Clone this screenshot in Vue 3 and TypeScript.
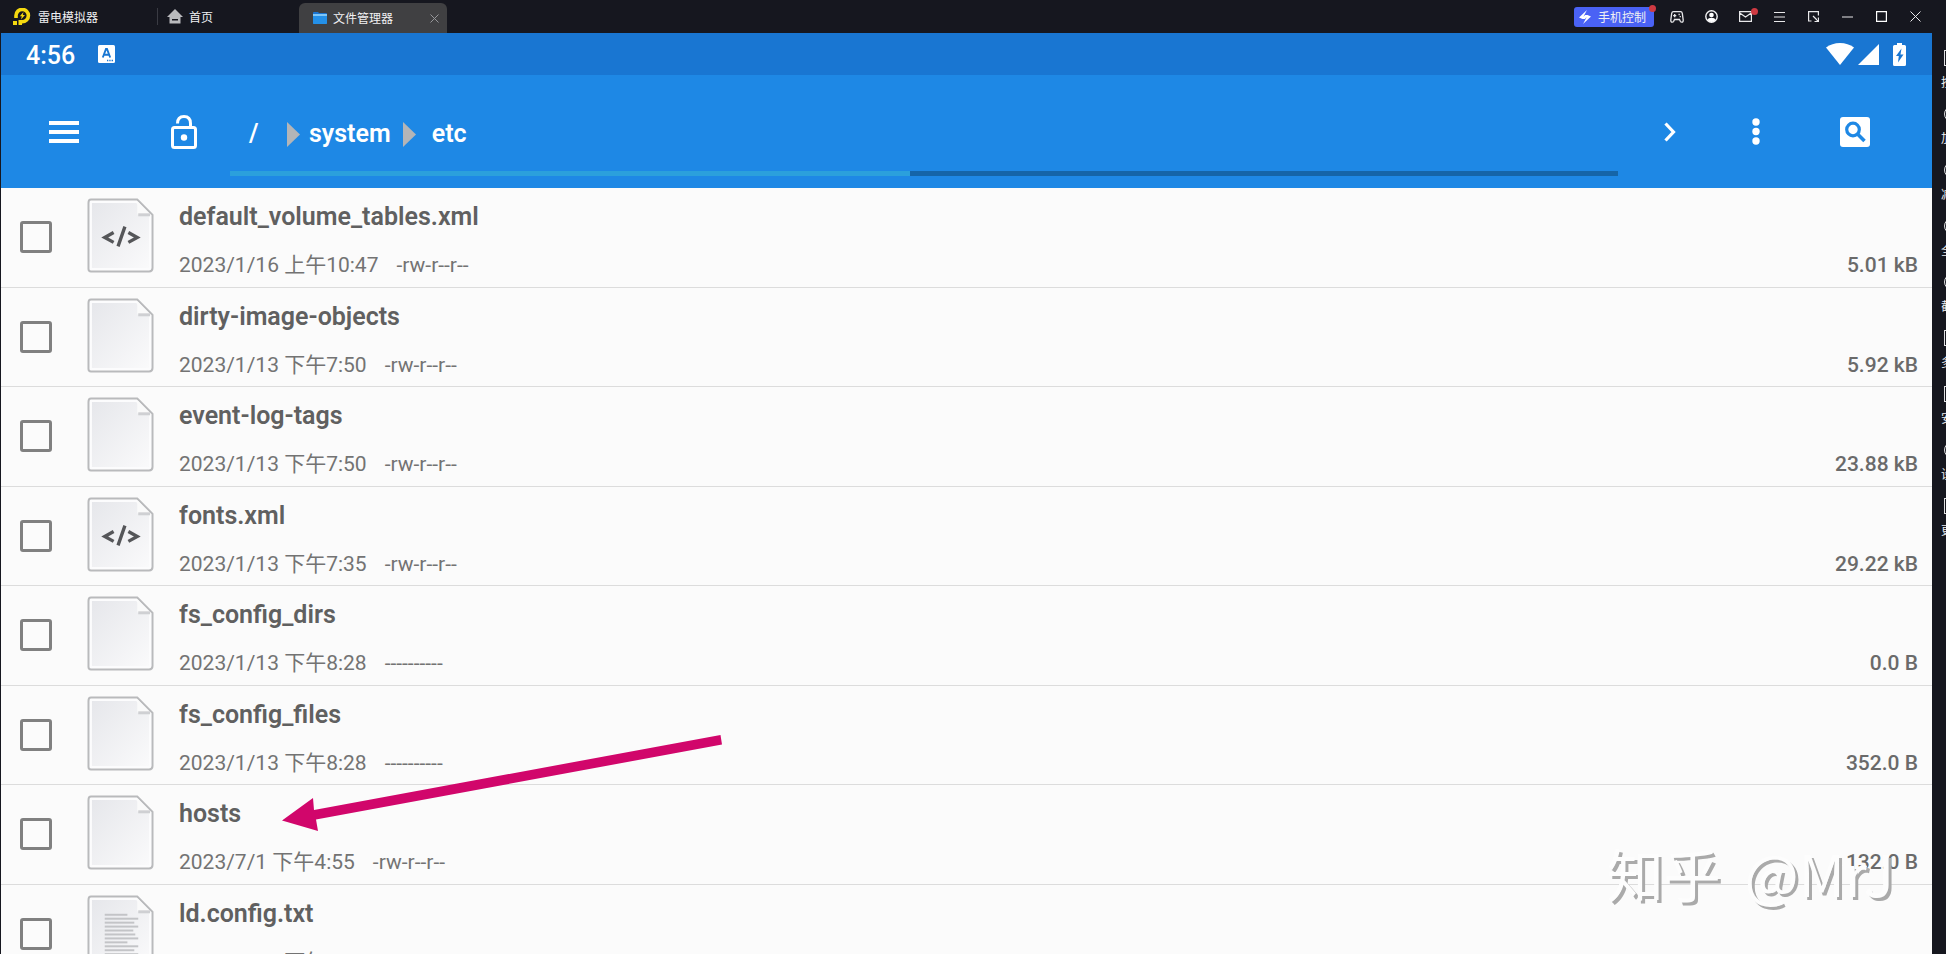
<script setup lang="ts">
interface FileRow {
  name: string
  date: string
  mode: string
  size: string
  kind: 'plain' | 'code' | 'text'
}

const files: FileRow[] = [
  { name: 'default_volume_tables.xml', date: '2023/1/16 上午10:47', mode: '-rw-r--r--', size: '5.01 kB', kind: 'code' },
  { name: 'dirty-image-objects', date: '2023/1/13 下午7:50', mode: '-rw-r--r--', size: '5.92 kB', kind: 'plain' },
  { name: 'event-log-tags', date: '2023/1/13 下午7:50', mode: '-rw-r--r--', size: '23.88 kB', kind: 'plain' },
  { name: 'fonts.xml', date: '2023/1/13 下午7:35', mode: '-rw-r--r--', size: '29.22 kB', kind: 'code' },
  { name: 'fs_config_dirs', date: '2023/1/13 下午8:28', mode: '----------', size: '0.0 B', kind: 'plain' },
  { name: 'fs_config_files', date: '2023/1/13 下午8:28', mode: '----------', size: '352.0 B', kind: 'plain' },
  { name: 'hosts', date: '2023/7/1 下午4:55', mode: '-rw-r--r--', size: '132.0 B', kind: 'plain' },
  { name: 'ld.config.txt', date: '2023/1/13 下午7:35', mode: '-rw-r--r--', size: '1.57 kB', kind: 'text' },
]

const textLines = [23, 34, 30, 34, 29, 31, 34, 23, 34, 30, 34, 29].map((w, i) => ({ w, y: 19 + i * 4 }))

interface Tool { label: string; shape: 'box' | 'round' }
const tools: Tool[] = [
  { label: '按键', shape: 'box' },
  { label: '加量', shape: 'round' },
  { label: '减量', shape: 'round' },
  { label: '全屏', shape: 'round' },
  { label: '截图', shape: 'round' },
  { label: '多开', shape: 'box' },
  { label: '安装', shape: 'box' },
  { label: '设置', shape: 'round' },
  { label: '更多', shape: 'box' },
]
</script>

<template>
  <div class="window">
    <header class="titlebar">
      <div class="brand">
        <svg width="18" height="18" viewBox="0 0 18 18">
          <path d="M3 10V7.500a6.200 6.200 0 1 1 6.200 6.300H8" fill="none" stroke="#f5d90f" stroke-width="3.600" />
          <path d="M10.500 4 6.800 8.300h2L8 11.500l4-4.500H9.800z" fill="#f5d90f" />
          <path d="M0 13h4v4H0zM5.500 12h3.500v5H5.500z" fill="#f5d90f" />
        </svg>
        <span>雷电模拟器</span>
      </div>
      <nav class="tabs">
        <button class="tab home" type="button">
          <svg width="16" height="15" viewBox="0 0 16 15">
            <path d="M8 0 0 8h2.500v6.500h11V8H16z" fill="#b9babd" />
            <path d="M5 10h6v1.500H5z" fill="#16171f" />
          </svg>
          <span>首页</span>
        </button>
        <div class="tab active">
          <svg width="14" height="12" viewBox="0 0 14 12">
            <path d="M0 1q0-1 1-1h4l1 1h7q1 0 1 1v9q0 1-1 1H1q-1 0-1-1z" fill="#1b74d0" />
            <path d="M0 2h14v2H0z" fill="#7fc6f7" />
            <path d="M0 4h14v7q0 1-1 1H1q-1 0-1-1z" fill="#2490e8" />
          </svg>
          <span>文件管理器</span>
          <button class="close" type="button" aria-label="关闭标签">
            <svg width="9" height="9" viewBox="0 0 9 9"><path d="m.5.5 8 8m0-8-8 8" stroke="#96979a" fill="none" /></svg>
          </button>
        </div>
      </nav>
      <div class="controls">
        <button class="phone" type="button">
          <svg width="12" height="14" viewBox="0 0 12 14"><path d="M8 0 0 7.500l3.500 1.500H6l1.500-2-3-.6zM4 14l8-7.500L8.500 5H6L4.500 7l3 .6z" fill="#fff" /></svg>
          <span>手机控制</span>
          <i class="dot"></i>
        </button>
        <button class="ctl" type="button" aria-label="手柄">
          <svg width="14" height="12" viewBox="0 0 14 12" fill="none" stroke="#e8e8ea" stroke-width="1.300">
            <path d="M3.500.7q-1.500 0-1.800 1.600L.8 8.800q-.2 2.400 1.400 2.400 1 0 1.500-1L4.500 8.500h5l.8 1.700q.5 1 1.500 1 1.600 0 1.400-2.400l-.9-6.500Q12 .7 10.500.7z" />
            <path d="M4.700 3v3.200M3.100 4.600h3.200M8.500 3.500h1.300M9.600 5.700h1.300" />
          </svg>
        </button>
        <button class="ctl" type="button" aria-label="账户">
          <svg width="13" height="13" viewBox="0 0 13 13"><circle cx="6.500" cy="6.500" r="5.700" fill="none" stroke="#f4f4f5" stroke-width="1.400" /><circle cx="6.500" cy="5" r="2.300" fill="#fff" /><path d="M2.500 10q.7-2.300 4-2.300t4 2.300q-1.600 1.900-4 1.900t-4-1.900" fill="#fff" /></svg>
        </button>
        <button class="ctl" type="button" aria-label="消息">
          <svg width="13" height="11" viewBox="0 0 13 11" fill="none" stroke="#e8e8ea" stroke-width="1.200"><path d="M.6.6h11.800v9.800H.6zM.8 2 6.500 6l5.700-4" /></svg>
          <i class="dot mail"></i>
        </button>
        <button class="ctl" type="button" aria-label="菜单">
          <svg width="11" height="10" viewBox="0 0 11 10"><path d="M0 .5h11M0 5h11M0 9.500h11" stroke="#e8e8ea" fill="none" /></svg>
        </button>
        <button class="ctl" type="button" aria-label="小窗">
          <svg width="11" height="11" viewBox="0 0 11 11" fill="none" stroke="#e8e8ea" stroke-width="1.200"><path d="M3.500 10H.6V.6h9.800v4M5 5l5 5M10.400 6.500v4H6.500" /></svg>
        </button>
        <button class="ctl" type="button" aria-label="最小化">
          <svg width="11" height="11" viewBox="0 0 11 11"><path d="M0 6h11" stroke="#e8e8ea" fill="none" /></svg>
        </button>
        <button class="ctl" type="button" aria-label="最大化">
          <svg width="11" height="11" viewBox="0 0 11 11"><path d="M.6.6h9.800v9.800H.6z" stroke="#fff" stroke-width="1.200" fill="none" /></svg>
        </button>
        <button class="ctl" type="button" aria-label="关闭">
          <svg width="11" height="11" viewBox="0 0 11 11"><path d="m.5.5 10 10m0-10-10 10" stroke="#e8e8ea" fill="none" /></svg>
        </button>
      </div>
    </header>

    <div class="body">
      <main class="screen">
        <div class="status">
          <span class="clock">4:56</span>
          <svg width="17" height="18" viewBox="0 0 17 18"><rect width="17" height="18" rx="1.500" fill="#fff" /><path d="m4.800 12.500 3.200-8.500h1l3.200 8.500M6 9.700h5" fill="none" stroke="#1976d2" stroke-width="1.900" /><path d="M9 15.500h1.300m1 0h1.300m1 0H15" stroke="#1976d2" stroke-width="1.300" /></svg>
          <div class="signals">
            <svg width="28" height="22" viewBox="0 0 28 22"><path d="M0 4.500Q6 0 14 0t14 4.500L14 22z" fill="#fff" /></svg>
            <svg class="cell" width="21" height="21" viewBox="0 0 21 21"><path d="M21 0v21H0z" fill="#fff" /></svg>
            <svg width="13" height="23" viewBox="0 0 13 23"><path d="M4 0h5v2h2.500Q13 2 13 3.500v18q0 1.500-1.500 1.500h-10Q0 23 0 21.500v-18Q0 2 1.500 2H4z" fill="#fff" /><path d="M8.500 5.500 3 13h2.800L5 19.500l5.500-8H7.500z" fill="#1976d2" /></svg>
          </div>
        </div>

        <div class="toolbar">
          <button class="icon menu" type="button" aria-label="打开菜单">
            <svg width="30" height="22" viewBox="0 0 30 22"><path d="M0 2h30M0 11h30M0 20h30" stroke="#fff" stroke-width="4" fill="none" /></svg>
          </button>
          <button class="icon lock" type="button" aria-label="解锁">
            <svg width="26" height="34" viewBox="0 0 26 34" fill="none" stroke="#fff" stroke-width="3"><rect x="1.500" y="12.500" width="23" height="20" rx="2" /><path d="M6.500 8.500Q6.500 1.500 13 1.500t6.500 7v4" /><circle cx="13" cy="22.500" r="3.200" fill="#fff" stroke="none" /></svg>
          </button>
          <div class="pathbox">
            <nav class="crumbs">
              <a href="#root" class="root">/</a>
              <svg width="13" height="25" viewBox="0 0 13 25"><path d="m0 0 13 12.500L0 25z" fill="#b4b5b7" /></svg>
              <a href="#system" class="sys">system</a>
              <svg width="13" height="25" viewBox="0 0 13 25"><path d="m0 0 13 12.500L0 25z" fill="#b4b5b7" /></svg>
              <a href="#etc" class="etc">etc</a>
            </nav>
            <div class="meter"><div class="fill"></div></div>
          </div>
          <div class="actions">
            <button class="icon next" type="button" aria-label="前进">
              <svg width="12" height="20" viewBox="0 0 12 20"><path d="m1.500 1.500 8 8.500-8 8.500" stroke="#fff" stroke-width="3.200" fill="none" /></svg>
            </button>
            <button class="icon more" type="button" aria-label="更多选项">
              <svg width="8" height="27" viewBox="0 0 8 27" fill="#fff"><circle cx="4" cy="4" r="3.700" /><circle cx="4" cy="13.500" r="3.700" /><circle cx="4" cy="23" r="3.700" /></svg>
            </button>
            <button class="icon find" type="button" aria-label="搜索">
              <svg width="30" height="30" viewBox="0 0 30 30"><rect width="30" height="30" rx="3" fill="#fff" /><circle cx="13" cy="12.500" r="6.300" fill="none" stroke="#1e88e5" stroke-width="3.200" /><path d="m17.500 17 7 7" stroke="#1e88e5" stroke-width="3.600" /></svg>
            </button>
          </div>
        </div>

        <ul class="list">
          <li v-for="(f, i) in files" :key="f.name" class="row">
            <input :id="`file-${i}`" class="tick" type="checkbox" />
            <svg class="sheet" width="67" height="75" viewBox="0 0 68 76">
              <defs>
                <linearGradient :id="`paper-${i}`" x1="0" y1="0" x2="1" y2="1"><stop offset="0" stop-color="#e6e7eb" /><stop offset="1" stop-color="#fafafb" /></linearGradient>
              </defs>
              <path d="M4 1.500h47L66.500 17v54q0 3.500-3.500 3.500H4Q1.500 74.500 1.500 72V5Q1.500 1.500 4 1.500z" fill="#fcfcfd" stroke="#b9babc" stroke-width="2" />
              <path d="M5 5h45l13 14v52H5z" :fill="`url(#paper-${i})`" />
              <path d="M51 3v12q0 3 3 3h11z" fill="#fafafa" />
              <path d="M52 17h12" fill="none" stroke="#cfd0d3" stroke-width="3" />
              <g v-if="f.kind === 'code'" fill="none" stroke="#555659" stroke-width="3.400"><path d="m27 35-9 5 9 5M42 35l9 5-9 5M38.500 29l-7 20" /></g>
              <g v-if="f.kind === 'text'" fill="#c3c4c7"><rect v-for="l in textLines" :key="l.y" x="18" :y="l.y" :width="l.w" height="2" /></g>
            </svg>
            <div class="info">
              <label class="name" :for="`file-${i}`">{{ f.name }}</label>
              <div class="meta"><span>{{ f.date }}</span><span>{{ f.mode }}</span></div>
            </div>
            <span class="size">{{ f.size }}</span>
          </li>
        </ul>

        <svg class="arrow" width="442" height="96" viewBox="0 0 442 96"><path d="M0 85.500 31 63l1 12L438.500 0l1.500 9.500L34 84.500l2 11.500z" fill="#d1066b" /></svg>
        <div class="mark"><span>知乎</span><span>@MrJ</span></div>
      </main>

      <aside class="side">
        <button v-for="t in tools" :key="t.label" class="tool" type="button">
          <i :class="['glyph', t.shape]"></i>
          <span>{{ t.label }}</span>
        </button>
      </aside>
    </div>
  </div>
</template>

<style>
body {
  margin: 0;
  overflow: hidden;
}
</style>

<style scoped>
* {
  box-sizing: border-box;
}
button {
  padding: 0;
  border: 0;
  background: none;
  color: inherit;
  font: inherit;
}
svg {
  display: block;
  flex: none;
}
.window {
  display: flex;
  flex-direction: column;
  height: 100vh;
  overflow: hidden;
  background: #16171f;
  color: #f0f0f2;
  font-family: Roboto, "Noto Sans CJK SC", sans-serif;
}
.titlebar {
  display: flex;
  flex: none;
  height: 33px;
  padding-right: 14px;
  font-family: "Noto Sans CJK SC", sans-serif;
  font-size: 12px;
  line-height: 18px;
}
.brand {
  display: flex;
  align-items: center;
  gap: 7px;
  width: 157px;
  padding-left: 13px;
}
.tabs {
  display: flex;
}
.tab {
  display: flex;
  align-items: center;
}
.home {
  align-self: center;
  gap: 6px;
  width: 142px;
  height: 17px;
  padding-left: 9px;
  border-left: 1px solid #3a3b43;
}
.active {
  gap: 6px;
  align-self: flex-end;
  width: 148px;
  height: 30px;
  padding: 0 8px 0 14px;
  border-radius: 6px 6px 0 0;
  background: #404042;
}
.close {
  margin-left: auto;
}
.controls {
  display: flex;
  align-items: center;
  margin-left: auto;
}
.phone {
  position: relative;
  display: flex;
  align-items: center;
  gap: 7px;
  height: 20px;
  margin-right: 6px;
  padding: 0 8px 0 5px;
  border-radius: 3px;
  background: #4a62f5;
}
.dot {
  position: absolute;
  top: -2px;
  right: -2px;
  width: 7px;
  height: 7px;
  border-radius: 50%;
  background: #cf3a42;
}
.ctl {
  position: relative;
  display: flex;
  align-items: center;
  justify-content: center;
  width: 34px;
  height: 32px;
}
.mail {
  top: 7px;
  right: 4px;
}
.body {
  display: flex;
  flex: 1;
  min-height: 0;
}
.screen {
  position: relative;
  display: flex;
  flex: 1;
  flex-direction: column;
  min-width: 0;
  margin-left: 1px;
  overflow: hidden;
  background: #fbfbfb;
}
.status {
  display: flex;
  flex: none;
  align-items: center;
  gap: 23px;
  height: 42px;
  padding: 0 26px 0 25px;
  background: #1976d2;
  color: #fff;
}
.clock {
  padding-top: 3px;
  font-size: 25px;
  font-weight: 500;
  line-height: 30px;
}
.signals {
  display: flex;
  align-items: center;
  gap: 4px;
  margin-left: auto;
}
.cell {
  margin-right: 10px;
}
.toolbar {
  display: flex;
  flex: none;
  height: 113px;
  padding: 0 62px 0 48px;
  background: #1e88e5;
}
.icon {
  display: flex;
  flex: none;
  align-items: center;
  height: 113px;
}
.menu {
  width: 122px;
}
.lock {
  width: 59px;
}
.pathbox {
  display: flex;
  flex: 1;
  flex-direction: column;
  justify-content: flex-end;
  padding-bottom: 12px;
}
.crumbs {
  display: flex;
  align-items: center;
  margin-bottom: 20px;
}
.crumbs a {
  color: #fff;
  font-size: 25px;
  font-weight: 600;
  line-height: 34px;
  text-decoration: none;
}
.root {
  width: 57px;
  padding-left: 19px;
}
.sys {
  padding: 0 12px 0 9px;
}
.etc {
  padding-left: 16px;
}
.meter {
  height: 5px;
  background: #1565a8;
}
.fill {
  width: 49%;
  height: 100%;
  background: #2ba0dc;
}
.actions {
  display: flex;
  justify-content: flex-end;
  width: 252px;
}
.next {
  width: 88px;
}
.more {
  width: 88px;
}
.list {
  margin: 0;
  padding: 0;
  list-style: none;
}
.row {
  display: flex;
  height: 100px;
  padding: 0 14px 0 19px;
  border-bottom: 1px solid #dcdcdc;
}
.row:nth-child(even) {
  height: 99px;
}
.tick {
  flex: none;
  width: 32px;
  height: 32px;
  margin: 33px 35px 0 0;
  appearance: none;
  border: 3px solid #808080;
  border-radius: 3px;
}
.sheet {
  margin-top: 10px;
}
.info {
  flex: 1;
  padding: 12px 0 0 25px;
}
.name {
  display: block;
  color: #606060;
  font-size: 25px;
  font-weight: 600;
  line-height: 34px;
}
.meta {
  display: flex;
  gap: 18px;
  margin-top: 14px;
  color: #737373;
  font-size: 21px;
  font-weight: 400;
  line-height: 34px;
}
.size {
  padding-top: 60px;
  color: #6a6a6a;
  font-size: 21px;
  font-weight: 500;
  line-height: 34px;
}
.arrow {
  position: absolute;
  top: 702px;
  left: 281px;
}
.mark {
  position: absolute;
  right: 38px;
  bottom: 44px;
  display: flex;
  gap: 24px;
  color: #fdfdfd;
  font-family: "Noto Sans CJK SC", sans-serif;
  font-size: 57px;
  line-height: 76px;
  text-shadow: 3px 3px 0 #aaa;
}
.side {
  display: flex;
  flex: none;
  flex-direction: column;
  width: 14px;
  padding: 17px 0 0 9px;
  overflow: hidden;
}
.tool {
  display: flex;
  flex: none;
  flex-direction: column;
  align-items: flex-start;
  gap: 7px;
  height: 56px;
  font-family: "Noto Sans CJK SC", sans-serif;
  font-size: 12px;
  line-height: 18px;
  white-space: nowrap;
}
.glyph {
  width: 16px;
  height: 16px;
  margin-left: 3px;
  border: 1px solid #e0e0e2;
}
.round {
  border-radius: 50%;
}
</style>
